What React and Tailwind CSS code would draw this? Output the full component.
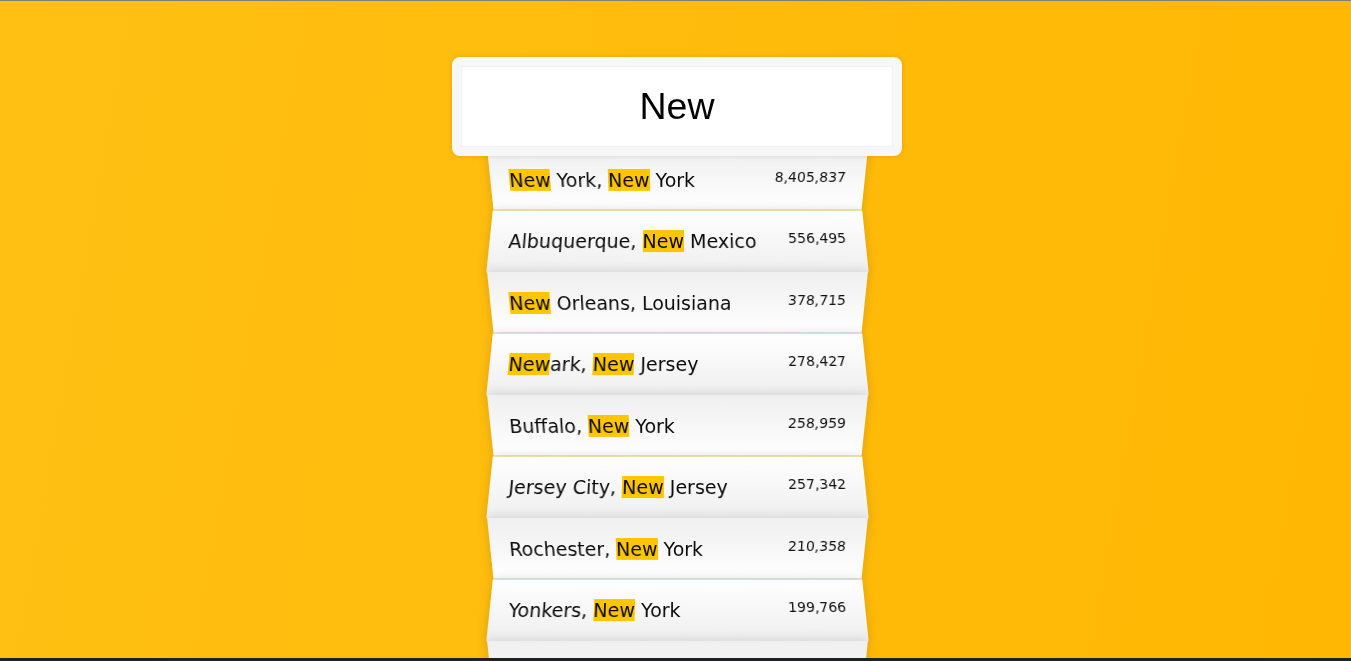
import React, { useState } from "react";

// Sample of the cities data (sorted by population)
const cities = [
  { city: "New York", state: "New York", population: "8405837" },
  { city: "Los Angeles", state: "California", population: "3884307" },
  { city: "Chicago", state: "Illinois", population: "2718782" },
  { city: "Albuquerque", state: "New Mexico", population: "556495" },
  { city: "New Orleans", state: "Louisiana", population: "378715" },
  { city: "Newark", state: "New Jersey", population: "278427" },
  { city: "Buffalo", state: "New York", population: "258959" },
  { city: "Jersey City", state: "New Jersey", population: "257342" },
  { city: "Rochester", state: "New York", population: "210358" },
  { city: "Yonkers", state: "New York", population: "199766" },
  { city: "Newport News", state: "Virginia", population: "182385" },
  { city: "New Haven", state: "Connecticut", population: "130660" },
];

const numberWithCommas = (x) => x.replace(/\B(?=(\d{3})+(?!\d))/g, ",");

const escapeRegex = (s) => s.replace(/[.*+?^${}()|[\]\\]/g, "\\$&");

const Highlight = ({ text, query }) => {
  if (!query) return text;
  const regex = new RegExp(`(${escapeRegex(query)})`, "gi");
  return text.split(regex).map((part, i) =>
    i % 2 === 1 ? (
      <span key={i} className="bg-[#ffc600]">
        {part}
      </span>
    ) : (
      <React.Fragment key={i}>{part}</React.Fragment>
    )
  );
};

const Row = ({ index, children }) => {
  const odd = index % 2 === 0;
  return (
    <li
      className={
        "flex justify-between px-[19px] pt-[20px] pb-[18px] leading-[22.5px] border-b border-[#d8d8d8] shadow-[0_0_10px_rgba(0,0,0,0.14)] " +
        (odd
          ? "[transform:perspective(94px)_rotateX(-3deg)_translateY(3px)] bg-[linear-gradient(to_top,#ffffff_0%,#efefef_100%)]"
          : "[transform:perspective(94px)_rotateX(3deg)_translateY(2px)_scale(1.001)] bg-[linear-gradient(to_bottom,#ffffff_0%,#efefef_100%)]")
      }
    >
      {children}
    </li>
  );
};

export default function App() {
  const [query, setQuery] = useState("New");

  const regex = new RegExp(escapeRegex(query), "gi");
  const matches = query
    ? cities.filter((place) => place.city.match(regex) || place.state.match(regex))
    : [];

  return (
    <div className="w-[1351px] h-[661px] overflow-hidden flex flex-col border-t border-[#7f7f7f] font-['DejaVu_Sans',sans-serif]">
      <div className="h-[657px] overflow-hidden pl-[3px] bg-[linear-gradient(100deg,#ffc013_0%,#ffbb0a_55%,#ffb702_100%)]">
        <form
          className="w-[450px] mx-auto pt-[56px]"
          onSubmit={(e) => e.preventDefault()}
        >
          <input
            type="text"
            value={query}
            onChange={(e) => setQuery(e.target.value)}
            placeholder="City or State"
            className="relative z-10 block w-full h-[99px] box-border px-[19px] border-[9px] border-[#f7f7f7] rounded-[8px] bg-white text-center text-[37.5px] text-black outline-none font-['Liberation_Sans',Arial,sans-serif] shadow-[0_0_5px_rgba(0,0,0,0.12),inset_0_0_2px_rgba(0,0,0,0.19)]"
          />
          <ul className="relative mx-[37.5px] -mt-[10px] text-[19px] text-[#0a0a0a]">
            {query ? (
              matches.map((place, i) => (
                <Row key={place.city + place.state} index={i}>
                  <span>
                    <Highlight text={place.city} query={query} />,{" "}
                    <Highlight text={place.state} query={query} />
                  </span>
                  <span className="text-[14px] leading-[16px] text-[#111]">
                    {numberWithCommas(place.population)}
                  </span>
                </Row>
              ))
            ) : (
              <>
                <Row index={0}>Filter for a city</Row>
                <Row index={1}>or a state</Row>
              </>
            )}
          </ul>
        </form>
      </div>
      <div className="h-[3px] bg-[#202124] shrink-0" />
    </div>
  );
}
